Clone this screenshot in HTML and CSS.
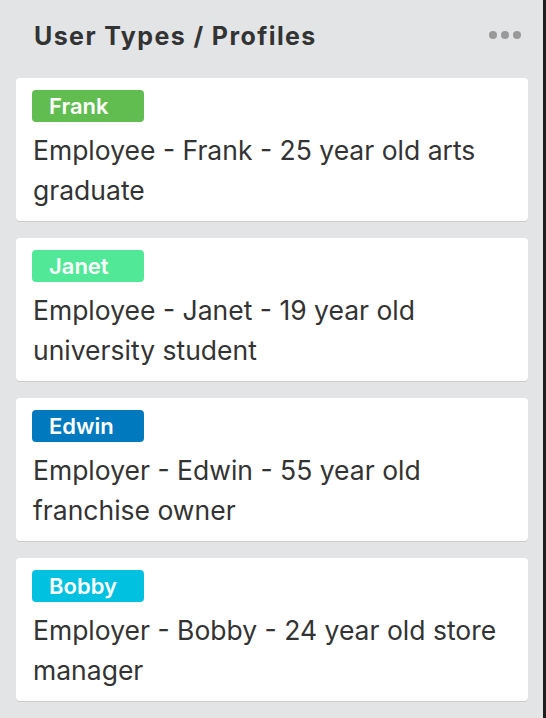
FILE: index.html
```html
<!DOCTYPE html>
<html>
<head>
<meta charset="utf-8">
<link rel="stylesheet" href="styles.css">
</head>
<body>
<div class="list">
  <div class="list-header">
    <h2 class="list-title">User Types / Profiles</h2>
    <div class="menu"><span></span><span></span><span></span></div>
  </div>
  <div class="cards">
    <div class="card">
      <span class="label green">Frank</span>
      <p class="desc">Employee - Frank - 25 year old arts graduate</p>
    </div>
    <div class="card">
      <span class="label lime">Janet</span>
      <p class="desc">Employee - Janet - 19 year old university student</p>
    </div>
    <div class="card">
      <span class="label blue">Edwin</span>
      <p class="desc">Employer - Edwin - 55 year old franchise owner</p>
    </div>
    <div class="card">
      <span class="label sky">Bobby</span>
      <p class="desc">Employer - Bobby - 24 year old store manager</p>
    </div>
  </div>
</div>
<div class="edge"></div>
</body>
</html>
```
FILE: styles.css
```css
html, body {
  margin: 0;
  padding: 0;
  height: 100%;
}
body {
  display: flex;
  background: #e2e4e6;
  font-family: Inter, "Liberation Sans", Arial, sans-serif;
  color: #333;
  overflow: hidden;
}
.list {
  width: 543px;
  flex: none;
  box-sizing: border-box;
  padding: 0 15px 0 16px;
}
.edge {
  flex: 1;
  background: #1e1e1e;
}
.list-header {
  height: 78px;
  display: flex;
  align-items: center;
  justify-content: space-between;
  padding: 0 7px 6px 18px;
  box-sizing: border-box;
}
.list-title {
  margin: 0;
  font-size: 25px;
  font-weight: bold;
  letter-spacing: 1.4px;
  color: #333;
}
.menu {
  display: flex;
  gap: 4px;
  margin-top: -3px;
}
.menu span {
  width: 8px;
  height: 8px;
  border-radius: 50%;
  background: #999;
}
.cards {
  display: flex;
  flex-direction: column;
  gap: 17px;
}
.card {
  background: #fff;
  border-radius: 4px;
  box-shadow: 0 1px 0 #ccc;
  padding: 12px 16px 10px 16px;
}
.label {
  display: block;
  width: 112px;
  height: 32px;
  box-sizing: border-box;
  border-radius: 4px;
  color: #fff;
  font-weight: 600;
  font-size: 22px;
  line-height: 32px;
  padding-left: 17px;
}
.green { background: #61bd4f; }
.lime { background: #51e898; }
.blue { background: #0079bf; }
.sky { background: #00c2e0; }
.desc {
  margin: 8px 0 0 1px;
  font-size: 26.5px;
  line-height: 40px;
  padding-bottom: 1px;
}
```
